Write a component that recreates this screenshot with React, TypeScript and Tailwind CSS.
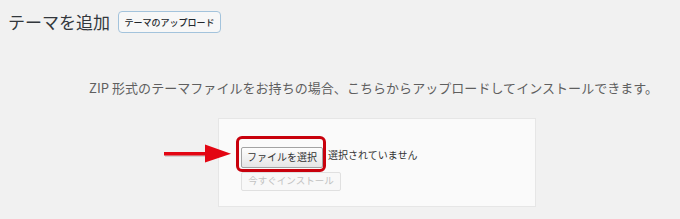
export default function App() {
  const jp = { fontFamily: '"Noto Sans CJK JP", "Noto Sans", sans-serif' };
  return (
    <div className="w-[680px] h-[219px] bg-[#f1f1f1] overflow-hidden relative" style={jp}>
      <div className="flex items-center gap-2 pl-2 pt-[11px]">
        <h1 className="text-[17px] leading-[22px] text-[#32373c] font-normal">テーマを追加</h1>
        <button className="h-[22px] w-[103px] border border-[#a3c3dc] bg-[#f7f7f7] rounded-sm text-[9px] font-medium text-[#23282d] leading-none">
          テーマのアップロード
        </button>
      </div>

      <p className="mt-[46px] pl-[89px] text-[13px] leading-[18px] text-[#5f5f5f] tracking-[0.05px]">
        ZIP 形式のテーマファイルをお持ちの場合、こちらからアップロードしてインストールできます。
      </p>

      <div className="relative ml-[218px] mt-[21px] w-[318px] h-[89px] bg-[#fafafa] border border-[#e6e6e6]">
        <svg className="absolute left-[-56px] top-[24px]" width="72" height="22" viewBox="0 0 72 22">
          <rect x="1" y="9.5" width="45" height="3.5" fill="#000" opacity="0.12" transform="translate(1,1)" />
          <rect x="1" y="9" width="45" height="3.5" fill="#e30613" />
          <polygon points="42,1.5 68,10.8 42,19.5" fill="#e30613" />
        </svg>
        <div className="pl-[22px] pt-[23px] flex flex-col items-start gap-[4px]">
          <div className="flex items-center">
            <div className="relative">
              <button className="h-[21px] w-[82px] border border-[#a3a3a3] rounded-[2px] bg-gradient-to-b from-[#fdfdfd] to-[#e6e6e6] text-[10px] text-[#333] leading-none">
                ファイルを選択
              </button>
              <div className="absolute left-[-5px] right-[-3px] top-[-6px] bottom-[-4px] border-[3px] border-[#c8000c] rounded-[6px]" />
            </div>
            <span className="ml-[5px] text-[10px] text-[#333] leading-none">選択されていません</span>
          </div>
          <button className="h-[19px] w-[100px] border border-[#e0e0e0] rounded-[2px] bg-[#f8f8f8] text-[9.5px] text-[#c2c2c2] leading-none">
            今すぐインストール
          </button>
        </div>
      </div>
    </div>
  );
}
